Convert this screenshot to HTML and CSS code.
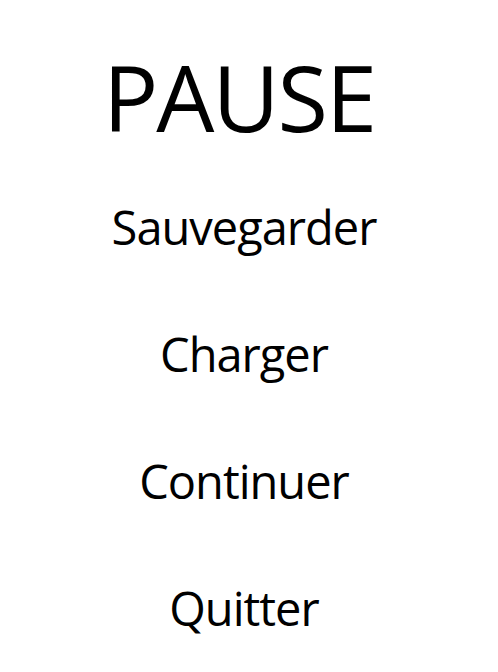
FILE: index.html
```html
<!DOCTYPE html>
<html>
<head>
<meta charset="utf-8">
<link rel="stylesheet" href="styles.css">
</head>
<body>
<main class="menu">
  <h1 class="title">PAUSE</h1>
  <div class="item">Sauvegarder</div>
  <div class="item">Charger</div>
  <div class="item">Continuer</div>
  <div class="item">Quitter</div>
</main>
</body>
</html>
```
FILE: styles.css
```css
html, body {
  margin: 0;
  padding: 0;
  background: #fff;
}
body {
  font-family: "Open Sans", "Noto Sans", sans-serif;
  color: #000;
  width: 498px;
  height: 672px;
  overflow: hidden;
}
.menu {
  display: flex;
  flex-direction: column;
  align-items: center;
  padding-right: 10px;
}
.title {
  margin: 0;
  font-weight: 400;
  font-size: 92px;
  letter-spacing: -2px;
  line-height: 127px;
  height: 131px;
  margin-top: 33px;
  padding-right: 10px;
}
.item {
  font-size: 47px;
  letter-spacing: -1px;
  line-height: 127px;
  height: 127px;
}
```
